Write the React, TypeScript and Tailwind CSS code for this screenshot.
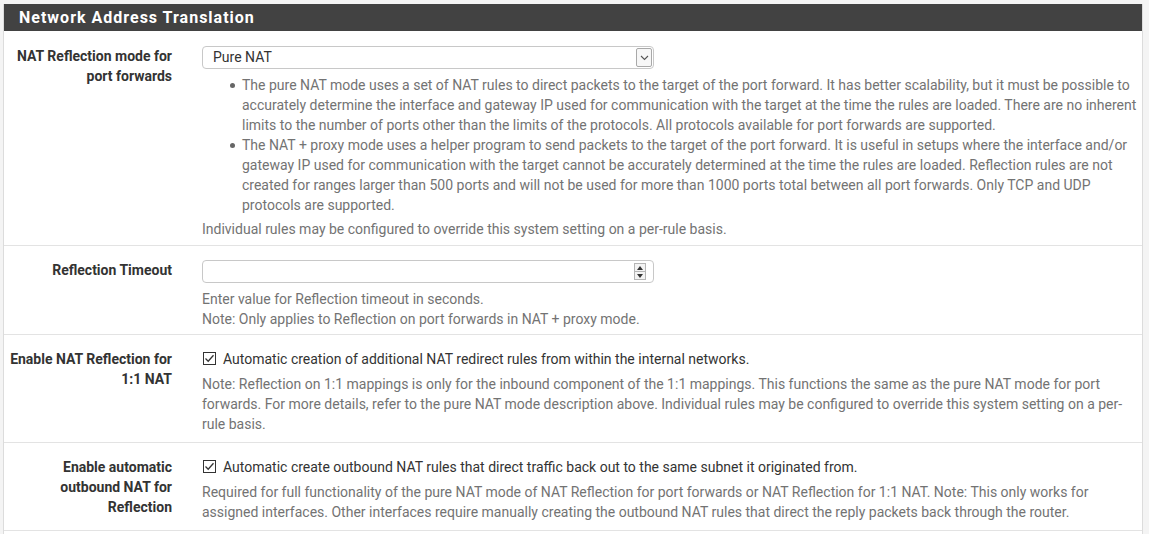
import type { ReactNode } from "react";

function Label({ children }: { children: ReactNode }) {
  return (
    <div className="w-[168px] shrink-0 text-right text-[14px] font-bold leading-[20px] text-[#333]">
      {children}
    </div>
  );
}

function Help({ children, className = "" }: { children: ReactNode; className?: string }) {
  return <div className={`text-[14px] leading-[20px] text-[#737373] ${className}`}>{children}</div>;
}

function Check() {
  return (
    <span className="mt-[3px] flex h-[13px] w-[13px] shrink-0 items-center justify-center border border-[#333] bg-white">
      <svg width="11" height="11" viewBox="0 0 11 11">
        <path d="M1.5 5.5 L4.2 8.2 L9.5 2.2" fill="none" stroke="#333" strokeWidth="1.3" />
      </svg>
    </span>
  );
}

export default function App() {
  return (
    <div className="min-h-[534px] w-[1149px] bg-[#f4f4f4] pt-[4px] pl-[3px] font-['Roboto',sans-serif]">
      <div className="w-[1140px] border-x border-[#dcdcdc] bg-white">
        <div className="flex h-[27px] items-center bg-[#424242] pl-[15px] text-[16px] font-bold tracking-[1px] text-white">
          Network Address Translation
        </div>

        {/* reflection mode */}
        <div className="flex gap-[30px] border-b border-[#e3e3e3] pt-[15px] pb-[6px]">
          <Label>
            NAT Reflection mode for
            <br />
            port forwards
          </Label>
          <div className="w-[936px]">
            <div className="flex h-[23px] w-[452px] items-center justify-between rounded-[4px] border border-[#c8c8c8] pl-[10px] pr-[1px] text-[14px] text-[#333]">
              <span>Pure NAT</span>
              <span className="flex h-[19px] w-[16px] items-center justify-center rounded-[2px] border border-[#a9a9a9] bg-[#f7f7f7]">
                <svg width="9" height="6" viewBox="0 0 9 6">
                  <path d="M1 1 L4.5 4.5 L8 1" fill="none" stroke="#555" strokeWidth="1.1" />
                </svg>
              </span>
            </div>
            <ul className="mt-[6px] pl-[40px]">
              <li className="relative">
                <span className="absolute top-[8px] left-[-12px] h-[5px] w-[5px] rounded-full bg-[#666]" />
                <Help>
                  The pure NAT mode uses a set of NAT rules to direct packets to the target of the port forward. It has better scalability, but it must be possible to accurately determine the interface and gateway IP used for communication with the target at the time the rules are loaded. There are no inherent limits to the number of ports other than the limits of the protocols. All protocols available for port forwards are supported.
                </Help>
              </li>
              <li className="relative">
                <span className="absolute top-[8px] left-[-12px] h-[5px] w-[5px] rounded-full bg-[#666]" />
                <Help>
                  The NAT + proxy mode uses a helper program to send packets to the target of the port forward. It is useful in setups where the interface and/or gateway IP used for communication with the target cannot be accurately determined at the time the rules are loaded. Reflection rules are not created for ranges larger than 500 ports and will not be used for more than 1000 ports total between all port forwards. Only TCP and UDP protocols are supported.
                </Help>
              </li>
            </ul>
            <Help className="mt-[4px]">Individual rules may be configured to override this system setting on a per-rule basis.</Help>
          </div>
        </div>

        {/* timeout */}
        <div className="flex gap-[30px] border-b border-[#e3e3e3] pt-[14px] pb-[5px]">
          <Label>Reflection Timeout</Label>
          <div className="w-[936px]">
            <div className="flex h-[23px] w-[452px] items-center justify-end rounded-[4px] border border-[#c8c8c8] pr-[7px]">
              <span className="flex h-[17px] w-[12px] flex-col border border-[#b5b5b5] bg-[#f3f3f3]">
                <span className="flex flex-1 items-center justify-center border-b border-[#b5b5b5]">
                  <svg width="6" height="4" viewBox="0 0 6 4">
                    <path d="M0 4 L3 0 L6 4 Z" fill="#333" />
                  </svg>
                </span>
                <span className="flex flex-1 items-center justify-center">
                  <svg width="6" height="4" viewBox="0 0 6 4">
                    <path d="M0 0 L3 4 L6 0 Z" fill="#333" />
                  </svg>
                </span>
              </span>
            </div>
            <Help className="mt-[6px]">
              Enter value for Reflection timeout in seconds.
              <br />
              Note: Only applies to Reflection on port forwards in NAT + proxy mode.
            </Help>
          </div>
        </div>

        {/* 1:1 */}
        <div className="flex gap-[30px] border-b border-[#e3e3e3] pt-[14px] pb-[8px]">
          <Label>
            Enable NAT Reflection for
            <br />
            1:1 NAT
          </Label>
          <div className="w-[936px]">
            <div className="flex gap-[7px] pl-[1px] text-[14px] leading-[20px] text-[#333]">
              <Check />
              <span>Automatic creation of additional NAT redirect rules from within the internal networks.</span>
            </div>
            <Help className="mt-[5px]">
              Note: Reflection on 1:1 mappings is only for the inbound component of the 1:1 mappings. This functions the same as the pure NAT mode for port forwards. For more details, refer to the pure NAT mode description above. Individual rules may be configured to override this system setting on a per-rule basis.
            </Help>
          </div>
        </div>

        {/* outbound */}
        <div className="flex gap-[30px] border-b border-[#e3e3e3] pt-[14px] pb-[8px]">
          <Label>
            Enable automatic
            <br />
            outbound NAT for
            <br />
            Reflection
          </Label>
          <div className="w-[936px]">
            <div className="flex gap-[7px] pl-[1px] text-[14px] leading-[20px] text-[#333]">
              <Check />
              <span>Automatic create outbound NAT rules that direct traffic back out to the same subnet it originated from.</span>
            </div>
            <Help className="mt-[5px]">
              Required for full functionality of the pure NAT mode of NAT Reflection for port forwards or NAT Reflection for 1:1 NAT. Note: This only works for assigned interfaces. Other interfaces require manually creating the outbound NAT rules that direct the reply packets back through the router.
            </Help>
          </div>
        </div>
        <div className="h-[20px]" />
      </div>
    </div>
  );
}
